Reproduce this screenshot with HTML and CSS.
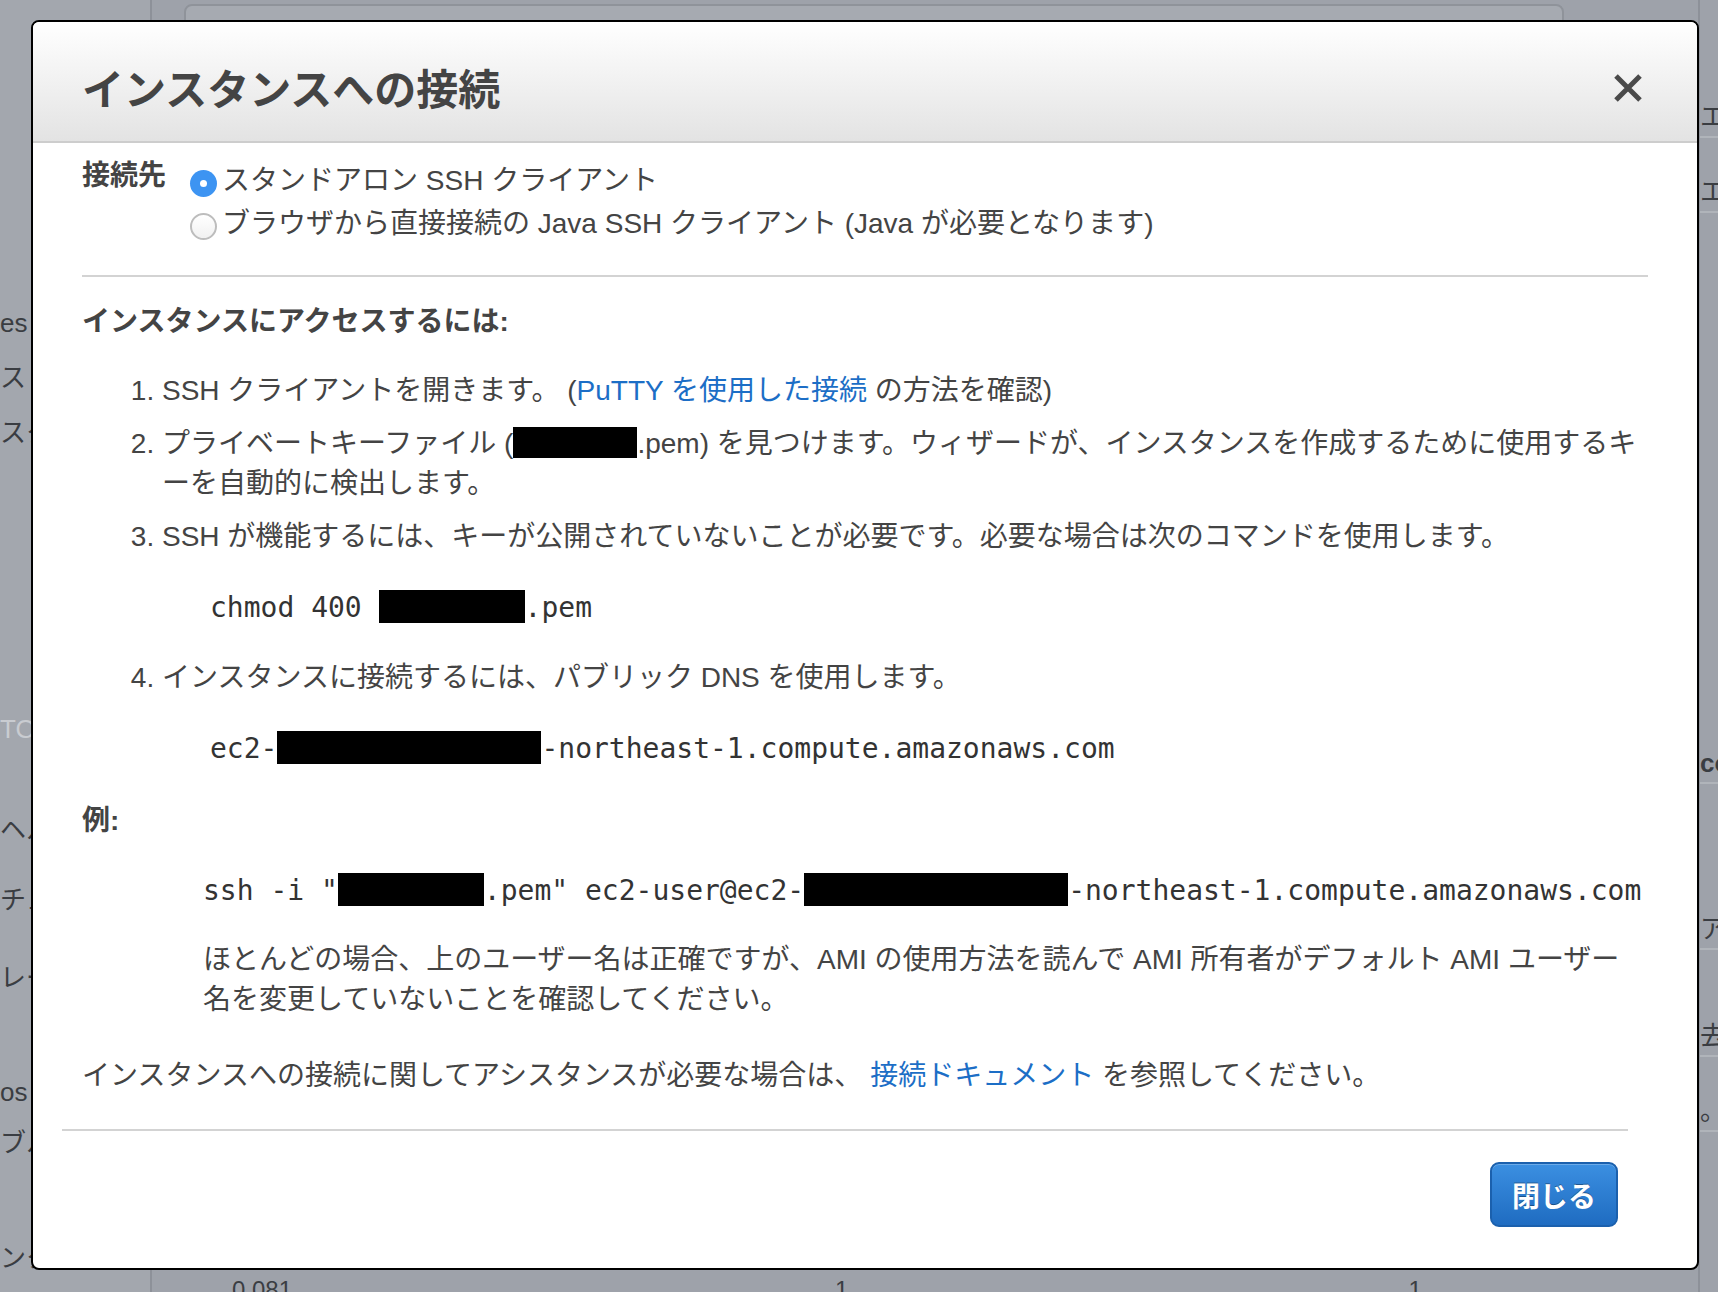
FILE: index.html
```html
<!DOCTYPE html>
<html lang="ja">
<head>
    <meta charset="UTF-8">
    <title>インスタンスへの接続</title>
    <link rel="stylesheet" href="styles.css">
</head>
<body>
    <!-- console behind the dialog, mostly covered -->
    <div class="page">
        <aside class="nav">
            <div class="nav-group g1">
                <div class="nav-item">es Tags</div>
                <div class="nav-item">ストレージ</div>
                <div class="nav-item">スタンス</div>
            </div>
            <div class="nav-group g2">
                <div class="nav-item head h101">TOOLS</div>
                <div class="nav-item h70">ヘルプ</div>
                <div class="nav-item h78">チュートリアル</div>
                <div class="nav-item">レート</div>
            </div>
            <div class="nav-group g3">
                <div class="nav-item h51">os</div>
                <div class="nav-item">ブルー</div>
            </div>
            <div class="nav-group g4">
                <div class="nav-item">ンタ</div>
            </div>
        </aside>
        <main class="console">
            <div class="search-panel"></div>
            <div class="table-row">
                <span class="cell-a">0.081</span>
                <span class="cell-b">1</span>
                <span class="cell-c">1</span>
            </div>
        </main>
        <aside class="side-pane">
            <div class="pane-item">エ</div>
            <div class="pane-item">エ.</div>
            <div class="pane-item">co</div>
            <div class="pane-item">ア</div>
            <div class="pane-item">去</div>
            <div class="pane-item">。</div>
        </aside>
    </div>

    <div class="modal">
        <div class="modal-header">
            <h2 class="modal-title">インスタンスへの接続</h2>
            <span class="close">
                <svg width="28" height="28" viewBox="0 0 28 28">
                    <path d="M2 2L26 26M26 2L2 26" stroke="#4a4a4a" stroke-width="5" fill="none"/>
                </svg>
            </span>
        </div>

        <div class="modal-body">
            <div class="connect-row">
                <div class="connect-label">接続先</div>
                <div class="connect-options">
                    <label class="option"><span class="radio checked"></span>スタンドアロン SSH クライアント</label>
                    <label class="option"><span class="radio"></span>ブラウザから直接接続の Java SSH クライアント (Java が必要となります)</label>
                </div>
            </div>

            <hr class="divider">

            <h4 class="section-title">インスタンスにアクセスするには:</h4>
            <ol class="steps">
                <li>SSH クライアントを開きます。 (<a href="#">PuTTY を使用した接続</a> の方法を確認)</li>
                <li>プライベートキーファイル (<span class="redact r-key"></span>.pem) を見つけます。ウィザードが、インスタンスを作成するために使用するキーを自動的に検出します。</li>
                <li>SSH が機能するには、キーが公開されていないことが必要です。必要な場合は次のコマンドを使用します。
                    <div class="code">chmod 400 <span class="redact r-file"></span>.pem</div>
                </li>
                <li>インスタンスに接続するには、パブリック DNS を使用します。
                    <div class="code">ec2-<span class="redact r-host"></span>-northeast-1.compute.amazonaws.com</div>
                </li>
            </ol>

            <h4 class="section-title example-title">例:</h4>
            <div class="example">
                <div class="code">ssh -i "<span class="redact r-file"></span>.pem" ec2-user@ec2-<span class="redact r-host"></span>-northeast-1.compute.amazonaws.com</div>
                <p class="note">ほとんどの場合、上のユーザー名は正確ですが、AMI の使用方法を読んで AMI 所有者がデフォルト AMI ユーザー名を変更していないことを確認してください。</p>
            </div>

            <p class="help">インスタンスへの接続に関してアシスタンスが必要な場合は、 <a href="#">接続ドキュメント</a> を参照してください。</p>
        </div>

        <div class="modal-footer">
            <button type="button" class="btn-close">閉じる</button>
        </div>
    </div>
</body>
</html>
```

FILE: styles.css
```css
* {
    margin: 0;
    padding: 0;
    box-sizing: border-box;
}

body {
    width: 1718px;
    height: 1292px;
    overflow: hidden;
    position: relative;
    background: #9ea2aa;
    font-family: "Liberation Sans", "Noto Sans CJK JP", sans-serif;
    color: #444;
}

/* ---- page under the overlay ---- */
.page {
    display: flex;
    height: 100%;
}

.nav {
    width: 152px;
    flex-shrink: 0;
    border-right: 2px solid #8d9199;
    background: #a3a7ae;
    font-size: 26px;
    color: #3a3d42;
    white-space: nowrap;
    overflow: hidden;
}

.nav-item {
    height: 55px;
    line-height: 36px;
}

.nav-item:last-child {
    height: 36px;
}

.g1 { padding-top: 305px; }
.g2 { padding-top: 260px; }
.g3 { padding-top: 78px; }
.g4 { padding-top: 79px; }

.nav-item.head {
    color: #c9ccd1;
}

.nav-item.h101 { height: 101px; }
.nav-item.h70 { height: 70px; }
.nav-item.h78 { height: 78px; }
.nav-item.h51 { height: 51px; }

.console {
    flex: 1;
    display: flex;
    flex-direction: column;
    justify-content: space-between;
}

.search-panel {
    margin: 4px 0 0 32px;
    width: 1380px;
    height: 80px;
    border: 2px solid #8f939a;
    border-radius: 8px;
    background: #a6aab1;
}

.table-row {
    height: 22px;
    overflow: hidden;
    font-size: 24px;
    color: #3a3d42;
    display: flex;
}

.cell-a {
    margin-left: 80px;
    padding-top: 6px;
}

.cell-b {
    margin-left: 543px;
    padding-top: 6px;
}

.cell-c {
    margin-left: 560px;
    padding-top: 6px;
}

.side-pane {
    width: 20px;
    flex-shrink: 0;
    overflow: hidden;
    font-size: 26px;
    color: #3a3d42;
    white-space: nowrap;
    border-left: 2px solid #8d9199;
}

.pane-item {
    height: 40px;
    line-height: 38px;
    border-bottom: 2px solid #b0b4ba;
}

.pane-item:nth-child(1) { margin-top: 98px; }
.pane-item:nth-child(2) { margin-top: 35px; }
.pane-item:nth-child(3) { margin-top: 531px; font-weight: bold; }
.pane-item:nth-child(4) { margin-top: 126px; }
.pane-item:nth-child(5) { margin-top: 67px; }
.pane-item:nth-child(6) { margin-top: 35px; }

/* ---- the dialog ---- */
.modal {
    position: absolute;
    top: 20px;
    left: 31px;
    width: 1668px;
    height: 1250px;
    background: #fff;
    border: 2px solid #000;
    border-radius: 8px;
    overflow: hidden;
}

.modal-header {
    height: 121px;
    padding: 9px 55px 0 49px;
    display: flex;
    align-items: center;
    justify-content: space-between;
    background: linear-gradient(#ffffff, #e3e3e3);
    border-bottom: 2px solid #cdcdcd;
}

.modal-title {
    font-size: 42px;
    font-weight: bold;
    color: #444;
}

.close {
    display: block;
    width: 28px;
    height: 28px;
    margin-top: 4px;
}

.modal-body {
    padding: 18px 49px 33px 49px;
    font-size: 28px;
    line-height: 40px;
}

.connect-row {
    display: flex;
}

.connect-label {
    width: 108px;
    flex-shrink: 0;
    font-weight: bold;
    line-height: 30px;
}

.option {
    display: flex;
    align-items: center;
    margin-bottom: 3px;
}

.radio {
    width: 27px;
    height: 27px;
    border-radius: 50%;
    margin: 4px 5px 0 0;
    flex-shrink: 0;
    border: 2px solid #bdbdbd;
    background: linear-gradient(#ffffff, #f1f1f1);
}

.radio.checked {
    border: none;
    background: #3d94f2;
    position: relative;
}

.radio.checked::after {
    content: "";
    position: absolute;
    left: 10px;
    top: 10px;
    width: 7px;
    height: 7px;
    border-radius: 50%;
    background: #fff;
}

.divider {
    border: none;
    border-top: 2px solid #d3d3d3;
    margin-top: 28px;
}

.section-title {
    font-size: 28px;
    font-weight: bold;
    line-height: 40px;
    margin-top: 25px;
}

.steps {
    margin-top: 29px;
    padding-left: 80px;
}

.steps li + li {
    margin-top: 13px;
}

a {
    color: #1c6ec6;
    text-decoration: none;
}

.code {
    font-family: "DejaVu Sans Mono", monospace;
    font-size: 28px;
    line-height: 40px;
    color: #333;
    white-space: nowrap;
    margin: 31px 0 30px 48px;
}

.redact {
    display: inline-block;
    background: #000;
    vertical-align: middle;
    height: 33px;
    margin-top: -6px;
}

.r-key {
    width: 124px;
    height: 31px;
}

.r-file {
    width: 146px;
}

.r-host {
    width: 264px;
}

.example-title {
    margin-top: 32px;
}

.example {
    padding-left: 121px;
}

.example .code {
    margin: 30px 0 29px 0;
}

.note {
    padding-right: 15px;
}

.help {
    margin-top: 36px;
}

.modal-footer {
    margin: 0 69px 0 29px;
    padding: 31px 10px 0 0;
    border-top: 2px solid #d3d3d3;
    display: flex;
    justify-content: flex-end;
}

.btn-close {
    width: 128px;
    height: 65px;
    border: 2px solid #1b60ad;
    border-radius: 9px;
    background: linear-gradient(#3b8fe1, #1f6cc1);
    color: #fff;
    font-family: "Liberation Sans", "Noto Sans CJK JP", sans-serif;
    font-size: 28px;
    font-weight: bold;
    text-shadow: 0 -1px 0 rgba(0, 0, 0, 0.35);
    box-shadow: inset 0 1px 0 rgba(255, 255, 255, 0.25);
    cursor: pointer;
}
```
